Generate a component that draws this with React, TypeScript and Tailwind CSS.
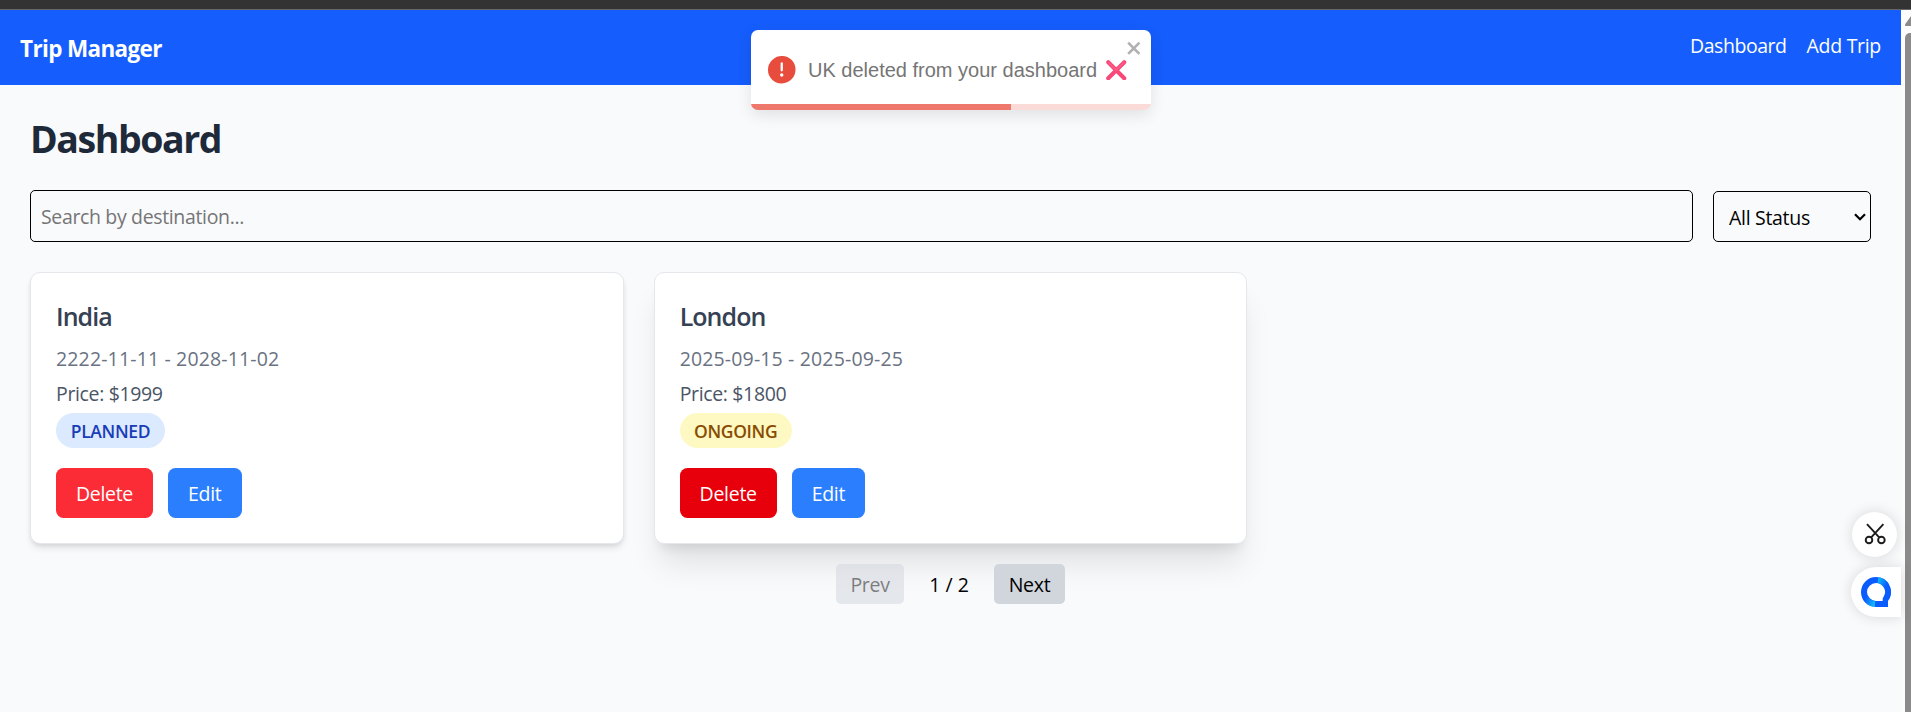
import React from "react";

type Trip = {
  name: string;
  dates: string;
  price: string;
  status: string;
  badge: string;
  shadow: string;
  remove: string;
};

const trips: Trip[] = [
  {
    name: "India",
    dates: "2222-11-11 - 2028-11-02",
    price: "Price: $1999",
    status: "PLANNED",
    badge: "w-[109px] bg-blue-100 text-blue-800",
    shadow: "shadow-[0_5px_7px_-1px_rgba(0,0,0,0.1),0_2px_5px_-2px_rgba(0,0,0,0.1)]",
    remove: "bg-red-500",
  },
  {
    name: "London",
    dates: "2025-09-15 - 2025-09-25",
    price: "Price: $1800",
    status: "ONGOING",
    badge: "w-[112px] bg-yellow-100 text-yellow-800",
    shadow: "shadow-[0_25px_31px_-6px_rgba(0,0,0,0.1),0_10px_12px_-7px_rgba(0,0,0,0.1)]",
    remove: "bg-red-600",
  },
];

function Navbar() {
  return (
    <header className="flex h-[75px] items-center justify-between bg-[#155dfc] px-5 text-white">
      <div className="pt-[2px] text-[22.5px] leading-[35px] font-bold tracking-[-0.65px]">Trip Manager</div>
      <nav className="flex gap-5 pb-1 text-[19.5px] leading-[30px]">
        <a className="tracking-[-0.45px]">Dashboard</a>
        <a>Add Trip</a>
      </nav>
    </header>
  );
}

function Filters() {
  return (
    <div className="mt-[30px] flex items-end gap-5">
      <input
        className="h-[52px] flex-1 rounded-[5px] border border-black bg-transparent px-[10px] text-[19.5px] tracking-[-0.35px] placeholder:text-[#757575]"
        placeholder="Search by destination..."
      />
      <div className="flex h-[51px] w-[158px] items-center justify-between rounded-[5px] border border-black pr-1 pl-[15px] text-[19.5px] text-black">
        <span className="pt-[2px]">All Status</span>
        <svg width="12" height="8" viewBox="0 0 12 8" fill="none" stroke="black" strokeWidth="2.2">
          <path d="M1 1.2 6 6.2 11 1.2" />
        </svg>
      </div>
    </div>
  );
}

function TripCard({ trip }: { trip: Trip }) {
  return (
    <article className={`h-[272px] rounded-[10px] border border-gray-200 bg-white px-[25px] pt-[26px] ${trip.shadow}`}>
      <h2 className="text-[25px] leading-[35px] font-semibold tracking-[-0.95px] text-gray-700">{trip.name}</h2>
      <p className="mt-[10px] text-[19.5px] leading-[30px] tracking-[0.15px] text-gray-500">{trip.dates}</p>
      <p className="mt-[5px] text-[19.5px] leading-[30px] tracking-[-0.35px] text-gray-600">{trip.price}</p>
      <div className={`mt-1 flex h-[35px] items-center justify-center rounded-full pt-[2px] text-[17.5px] leading-[25px] font-semibold tracking-[-0.35px] ${trip.badge}`}>
        {trip.status}
      </div>
      <div className="mt-5 flex gap-[15px] text-[19.5px] text-white">
        <button className={`h-[50px] w-[97px] rounded-[7.5px] pt-[2px] ${trip.remove}`}>Delete</button>
        <button className="h-[50px] w-[73.5px] rounded-[7.5px] bg-[#2b7fff] pt-[2px]">Edit</button>
      </div>
    </article>
  );
}

function Toast() {
  return (
    <div className="absolute top-[30px] left-[751px] flex h-20 w-[400px] items-center overflow-hidden rounded-[7px] bg-white pl-[17px] shadow-[0_5px_15px_rgba(0,0,0,0.1)]">
      <svg className="size-[27.5px] shrink-0" viewBox="0 0 24 24" fill="#e74c3c">
        <path d="M11.983 0a12.206 12.206 0 00-8.51 3.653A11.8 11.8 0 000 12.207 11.779 11.779 0 0011.8 24h.214A12.111 12.111 0 0024 11.791 11.766 11.766 0 0011.983 0zM10.5 16.542a1.476 1.476 0 011.449-1.53h.027a1.527 1.527 0 011.523 1.47 1.475 1.475 0 01-1.449 1.53h-.027a1.529 1.529 0 01-1.523-1.47zM11 12.5v-6a1 1 0 012 0v6a1 1 0 11-2 0z" />
      </svg>
      <span className="ml-[12.5px] font-['Liberation_Sans',sans-serif] text-[20px] tracking-normal whitespace-nowrap text-[#757575]">
        UK deleted from your dashboard
      </span>
      <svg className="ml-[9px] size-[20.5px] shrink-0" viewBox="0 0 20 20" fill="none" stroke="#f94877" strokeWidth="4" strokeLinecap="round">
        <path d="M2.200 2.200 17.800 17.800M17.800 2.200 2.200 17.800" />
        <path d="M2.600 2.600 10 10 17.400 2.600" stroke="#ff5c8a" strokeWidth="1.500" />
      </svg>
      <svg className="absolute top-2 left-[375px] h-5 w-[17.5px] fill-black opacity-30" viewBox="0 0 14 16">
        <path fillRule="evenodd" d="M7.71 8.23l3.75 3.75-1.48 1.48-3.75-3.75-3.75 3.75L1 11.98l3.75-3.75L1 4.48 2.48 3l3.75 3.75L9.98 3l1.48 1.48-3.75 3.75z" />
      </svg>
      <div className="absolute bottom-0 left-0 h-[6px] w-full bg-[#fadbd8]">
        <div className="h-full w-[260px] bg-[#ee786b]" />
      </div>
    </div>
  );
}

function FloatingTools() {
  return (
    <div className="absolute top-[512px] right-[10px] flex flex-col items-end gap-[10px]">
      <div className="mr-1 flex size-[45px] items-center justify-center rounded-full bg-white pb-[2px] shadow-[0_0_14px_rgba(0,0,0,0.14)]">
        <svg width="22" height="22" viewBox="0 0 22 22" fill="none" stroke="#1c1c1c" strokeWidth="1.9">
          <circle cx="5" cy="17" r="3.3" />
          <circle cx="17.400" cy="17" r="3.3" />
          <path d="M3 1.100 15.200 14.300M19.400 1.100 7.200 14.300" />
        </svg>
      </div>
      <div className="flex h-[50px] w-[50px] items-center rounded-l-full bg-white pl-[10px] shadow-[0_0_14px_rgba(0,0,0,0.14)]">
        <svg width="30" height="30" viewBox="0 0 30 30">
          <defs>
            <linearGradient id="topArc" gradientUnits="userSpaceOnUse" x1="16" y1="3" x2="26" y2="8">
              <stop offset="0" stopColor="#08c0f5" />
              <stop offset="1" stopColor="#0b5cff" />
            </linearGradient>
            <linearGradient id="bottomArc" gradientUnits="userSpaceOnUse" x1="4" y1="22" x2="14" y2="27">
              <stop offset="0" stopColor="#0b5cff" />
              <stop offset="1" stopColor="#12bdf5" />
            </linearGradient>
          </defs>
          <path d="M15 0a15 15 0 1 0 0 30h12v-6A15 15 0 0 0 15 0Zm0 6a9 9 0 0 1 7.500 14l-.8 1.200V24H15A9 9 0 0 1 15 6Z" fill="#0b5cff" fillRule="evenodd" />
          <path d="M17 3.150a12 12 0 0 1 8.500 5.900" stroke="url(#topArc)" strokeWidth="6" fill="none" />
          <path d="M4.500 20.800a12 12 0 0 0 9.500 6.150" stroke="url(#bottomArc)" strokeWidth="6" fill="none" />
        </svg>
      </div>
    </div>
  );
}

export default function App() {
  return (
    <div className="relative flex h-[712px] w-[1911px] flex-col overflow-hidden bg-[#f9fafc] font-['Open_Sans','Noto_Sans',sans-serif] tracking-[-0.3px]">
      <div className="h-[10px] shrink-0 border-b border-[#666] bg-[#333]" />
      <div className="flex min-h-0 flex-1">
        <div className="flex-1">
          <Navbar />
          <main className="px-[30px] pt-[31px]">
            <h1 className="-mb-px text-[37.5px] leading-[45px] font-bold tracking-[-1.45px] text-gray-800">Dashboard</h1>
            <Filters />
            <section className="mt-[30px] grid grid-cols-3 gap-[30px]">
              {trips.map((trip) => (
                <TripCard key={trip.name} trip={trip} />
              ))}
            </section>
            <div className="mt-5 flex items-center justify-center text-[19.5px] text-black">
              <button className="h-10 w-[68px] rounded-[5px] bg-gray-300 pt-[2px] opacity-50">Prev</button>
              <span className="w-[90px] pt-[2px] text-center tracking-normal">1 / 2</span>
              <button className="h-10 w-[71px] rounded-[5px] bg-gray-300 pt-[2px]">Next</button>
            </div>
          </main>
        </div>
        <div className="flex w-[10px] flex-col overflow-hidden bg-[#fcfcfc] pl-1">
          <svg className="mt-[6px] h-[10px] w-[14px] shrink-0" viewBox="0 0 14 10" fill="#8b8b8b">
            <path d="M5.500.8Q7-.8 8.500.8L13.600 8Q14 10 12.500 10H1Q-.5 10 .3 8Z" />
          </svg>
          <div className="mt-[7px] w-3 flex-1 rounded-tl-[5px] bg-[#8b8b8b]" />
        </div>
      </div>
      <Toast />
      <FloatingTools />
    </div>
  );
}
